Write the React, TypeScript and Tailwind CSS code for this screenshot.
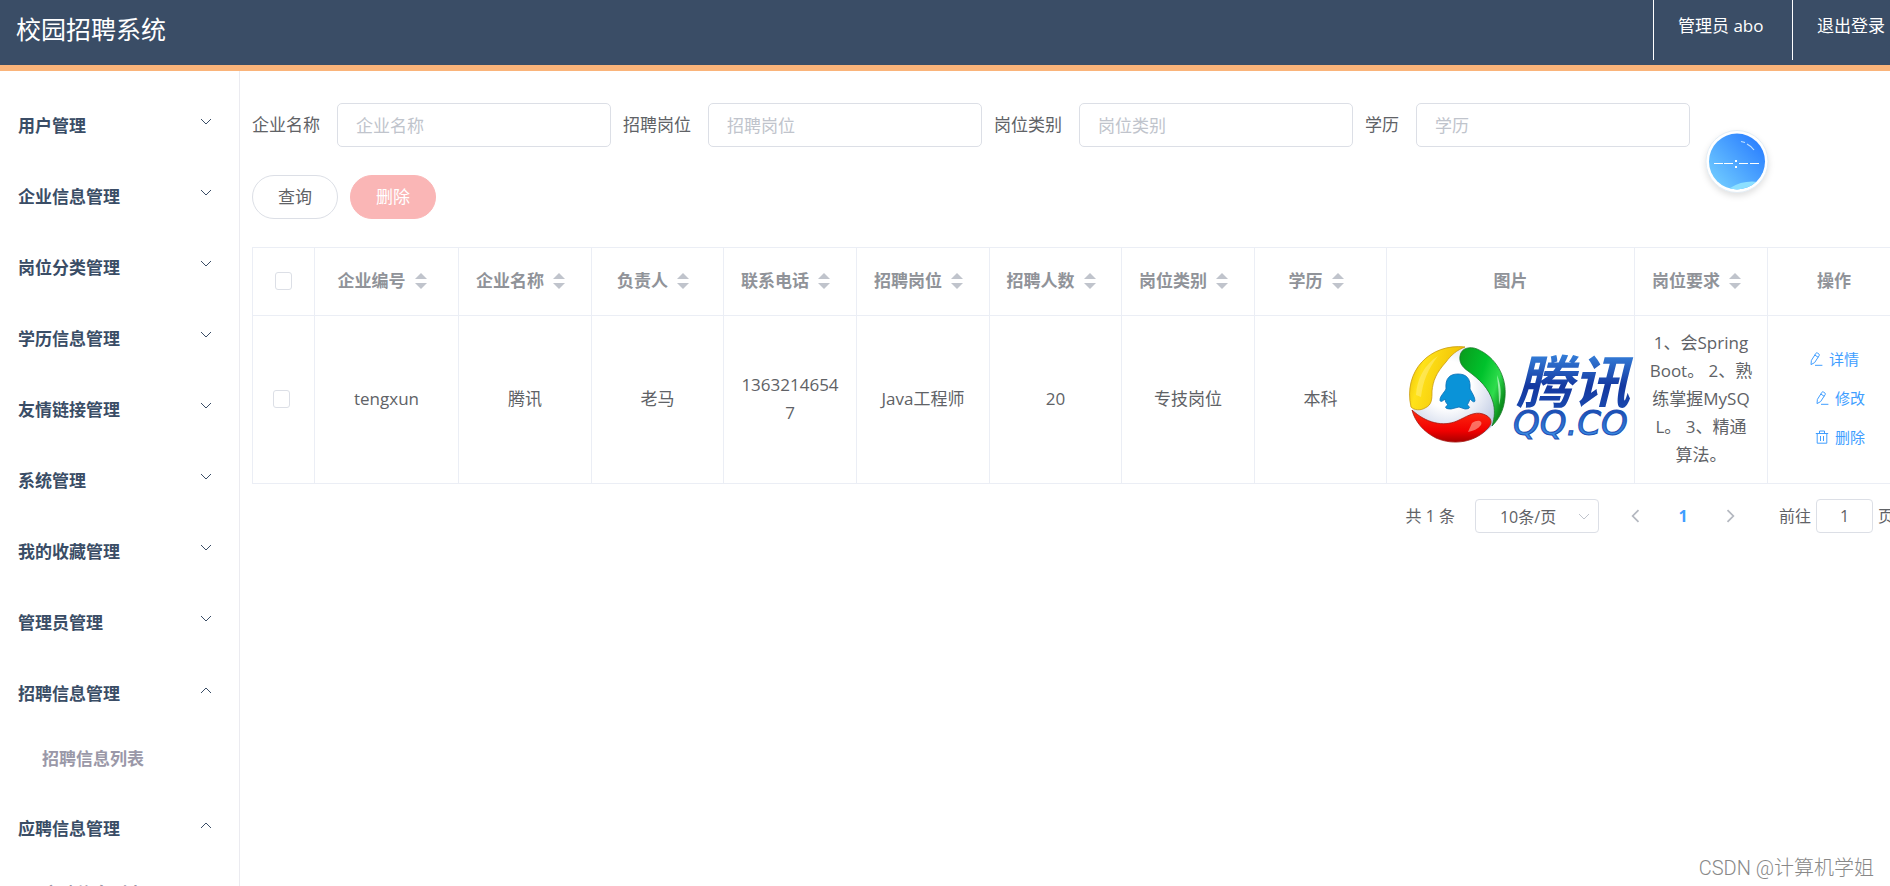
import { useState } from "react";

type MenuItem = {
    title: string;
    child?: string;
};

const menus: MenuItem[] = [
    { title: "用户管理" },
    { title: "企业信息管理" },
    { title: "岗位分类管理" },
    { title: "学历信息管理" },
    { title: "友情链接管理" },
    { title: "系统管理" },
    { title: "我的收藏管理" },
    { title: "管理员管理" },
    { title: "招聘信息管理", child: "招聘信息列表" },
    { title: "应聘信息管理", child: "应聘信息列表" },
];

const filters = [
    { id: "company", label: "企业名称" },
    { id: "job", label: "招聘岗位" },
    { id: "category", label: "岗位类别" },
    { id: "education", label: "学历" },
];

const columns = [
    { title: "企业编号", width: "w-[144px]", sortable: true },
    { title: "企业名称", width: "w-[133px]", sortable: true },
    { title: "负责人", width: "w-[132px]", sortable: true },
    { title: "联系电话", width: "w-[133px]", sortable: true },
    { title: "招聘岗位", width: "w-[133px]", sortable: true },
    { title: "招聘人数", width: "w-[132px]", sortable: true },
    { title: "岗位类别", width: "w-[133px]", sortable: true },
    { title: "学历", width: "w-[132px]", sortable: true },
    { title: "图片", width: "w-[248px]", sortable: false },
    { title: "岗位要求", width: "w-[133px]", sortable: true },
    { title: "操作", width: "w-[133px]", sortable: false },
];

const row = {
    cells: ["tengxun", "腾讯", "老马", "13632146547", "Java工程师", "20", "专技岗位", "本科"],
    requirement: "1、会SpringBoot。 2、熟练掌握MySQL。 3、精通算法。",
};

function Arrow({ className, d }: { className: string; d: string }) {
    return (
        <svg className={className} viewBox="0 0 12 12" fill="none" stroke="currentColor" aria-hidden="true">
            <path d={d} />
        </svg>
    );
}

function SortIcon() {
    return (
        <svg className="w-[30px] h-4 text-[#c0c4cc]" viewBox="0 0 30 16" fill="currentColor" aria-hidden="true">
            <path d="M15 0l6 6H9z" />
            <path d="M9 10h12l-6 6z" />
        </svg>
    );
}

function EditIcon() {
    return (
        <svg className="w-[14px] h-[14px]" viewBox="0 0 14 14" fill="none" stroke="currentColor" aria-hidden="true">
            <path d="M2.4 8.400L6.900 1.300Q7.500.5 8.400 1L10 2.100Q10.800 2.700 10.200 3.600L5.600 10.600L2 12.600zM5.800 3L9.200 5.300M6 13.300H13.400" />
        </svg>
    );
}

function DeleteIcon() {
    return (
        <svg className="w-[14px] h-[14px]" viewBox="0 0 14 14" fill="none" stroke="currentColor" aria-hidden="true">
            <path d="M.8 3.500h12.400M4.500 3.300V1h5v2.300M2.200 3.500v9.700h9.600V3.500M5.500 6v5M8.500 6v5" />
        </svg>
    );
}

function CompanyLogo() {
    return (
        <svg className="block w-[235px] h-[125px]" viewBox="0 0 235 125" role="img" aria-label="腾讯">
            <defs>
                <radialGradient id="ball" cx="0.4" cy="0.4" r="0.62">
                    <stop offset="0.4" stopColor="#ffffff" />
                    <stop offset="1" stopColor="#bcc8e2" />
                </radialGradient>
                <linearGradient id="yellow" x1="0" y1="0" x2="1" y2="0.3">
                    <stop offset="0" stopColor="#e6b800" />
                    <stop offset="0.3" stopColor="#ffe21a" />
                    <stop offset="1" stopColor="#efbd00" />
                </linearGradient>
                <linearGradient id="green" x1="0" y1="0" x2="1" y2="0.6">
                    <stop offset="0" stopColor="#0a9a1c" />
                    <stop offset="0.5" stopColor="#00c22c" />
                    <stop offset="0.8" stopColor="#2fdc4c" />
                    <stop offset="1" stopColor="#0b8f1d" />
                </linearGradient>
                <linearGradient id="red" x1="0" y1="0" x2="0" y2="1">
                    <stop offset="0" stopColor="#ff2a10" />
                    <stop offset="0.65" stopColor="#f00000" />
                    <stop offset="1" stopColor="#a80000" />
                </linearGradient>
                <linearGradient id="word" x1="0" y1="0" x2="0" y2="1">
                    <stop offset="0.15" stopColor="#3a8ae2" />
                    <stop offset="0.6" stopColor="#1438a0" />
                    <stop offset="1" stopColor="#1c50b4" />
                </linearGradient>
                <linearGradient id="site" x1="0" y1="0" x2="0" y2="1">
                    <stop offset="0.2" stopColor="#1c50b4" />
                    <stop offset="0.8" stopColor="#3a8ae2" />
                </linearGradient>
            </defs>
            <circle cx="58.500" cy="57" r="47" fill="url(#ball)" />
            <path d="M12 70C4 34 31 6 66 10C58 13 52 18 47 25C37 36 34 44 33 54C33 62 33 68 26 71C21 74 15 73 12 70z" fill="url(#yellow)" stroke="#c99a10" strokeWidth="0.800" />
            <path d="M61 19C62 11 71 9 78 12C97 20 108 40 106 60C105 73 100 82 93 89C96 80 96 72 94 65C90 51 80 42 69 34C63 30 60 25 61 19z" fill="url(#green)" stroke="#1b7a2a" strokeWidth="0.800" />
            <path d="M13 73C27 86 44 90 58 84C67 80 75 74 84 77C93 80 94 86 89 91C77 105 55 109 37 101C25 95 16 85 13 73z" fill="url(#red)" stroke="#a51810" strokeWidth="0.800" />
            <path d="M17 58C18 42 25 28 39 19C29 32 24 44 22 60z" fill="#fff3a0" opacity="0.400" />
            <path d="M98 38C102 48 103 58 100 68C100 56 99 48 98 38z" fill="#d0ffd8" opacity="0.700" />
            <path d="M73 86C79 82 84 84 82 88C79 92 74 94 69 95z" fill="#ffb0a0" opacity="0.600" />
            <path d="M47 52C46 41 51 37 59 37C67 37 72 41 71 52C73 56 76 60 76 64C75 66 73 64 71 62C70 65 69 67 68 68C72 70 71 72 66 72L60 70L52 72C46 72 45 70 49 68C47 66 46 64 46 62C43 65 41 65 41 63C41 59 45 56 47 52z" fill="#0a93d8" stroke="#0a6fb5" strokeWidth="0.800" />
            <text x="117" y="66" className="font-['Noto_Sans_CJK_SC',sans-serif] text-[57px] font-bold italic" fill="url(#word)">腾讯</text>
            <text x="114" y="98" className="font-['DejaVu_Sans',sans-serif] text-[34px] italic" fill="url(#site)" stroke="#1c50b4">QQ.CO</text>
        </svg>
    );
}

function ClockBall() {
    return (
        <svg className="absolute top-[126px] left-[1701px] w-[72px] h-[76px] drop-shadow-md" viewBox="0 0 72 76" role="img" aria-label="clock">
            <defs>
                <linearGradient id="sky" x1="0.1" y1="0.9" x2="0.85" y2="0.2">
                    <stop offset="0" stopColor="#70cbff" />
                    <stop offset="1" stopColor="#3085ff" />
                </linearGradient>
                <clipPath id="skyClip">
                    <circle cx="36" cy="35.500" r="28" />
                </clipPath>
            </defs>
            <circle cx="36" cy="35.500" r="31" fill="#fff" stroke="#e3edf5" />
            <circle cx="36" cy="35.500" r="28" fill="url(#sky)" />
            <g clipPath="url(#skyClip)">
                <path d="M29 62Q42 54 57 56L54 66H28z" fill="#8de0ff" />
            </g>
            <path d="M13 37.500h9M23 37.500h9M38 37.500h9M49 37.500h9" stroke="#fff" />
            <path d="M34 34h2v2h-2zM34 40h2v2h-2z" fill="#fff" />
            <path d="M40 15.500l4 1M46 18q4 2 7 6" stroke="#c4e2ff" strokeWidth="1.200" fill="none" />
        </svg>
    );
}

function Header() {
    return (
        <header className="flex items-start justify-between h-[71px] bg-[#3a4d66] border-b-[6px] border-[#fab47a] text-white">
            <h1 className="pl-4 text-[25px] leading-[58px]">校园招聘系统</h1>
            <nav className="flex">
                <a href="#admin" className="w-[139px] h-[60px] pl-6 border-l border-white leading-[52px]">管理员 abo</a>
                <a href="#logout" className="w-[120px] h-[60px] pl-6 border-l border-white leading-[52px]">退出登录</a>
            </nav>
        </header>
    );
}

function Sidebar() {
    return (
        <aside className="w-[240px] shrink-0 pt-5 border-r border-[#ebebf0] font-bold">
            {menus.map((m) => (
                <div key={m.title}>
                    <button type="button" aria-expanded={!!m.child} className="flex items-center justify-between w-full h-[71px] pl-[18px] pr-[27px] pb-px text-[#3a4d66]">
                        {m.title}
                        <Arrow className="w-3 h-3 mb-2" d={m.child ? "M1 9l5-5 5 5" : "M1 3l5 5 5-5"} />
                    </button>
                    {m.child && (
                        <a href="#list" className="flex items-center h-[60px] mb-1 pl-[42px] pb-0.5 text-[#9a98a8]">{m.child}</a>
                    )}
                </div>
            ))}
        </aside>
    );
}

function JobTable() {
    const [checked, setChecked] = useState(false);
    const box = "block appearance-none w-[17px] h-[18px] border border-[#dcdfe6] rounded-[3px] bg-white checked:bg-[#409eff]";

    return (
        <table className="w-full table-fixed border-collapse border border-[#ebeef5] text-center leading-7">
            <thead>
                <tr className="h-[68px] text-[#909399]">
                    <th className="w-[62px] border border-[#ebeef5] pl-[22px] pb-0.5">
                        <input type="checkbox" aria-label="全选" className={box} checked={checked} onChange={() => setChecked(!checked)} />
                    </th>
                    {columns.map((c) => (
                        <th key={c.title} className={`${c.width} border border-[#ebeef5] pb-0.5`}>
                            <div className="flex items-center justify-center">
                                {c.title}
                                {c.sortable && <SortIcon />}
                            </div>
                        </th>
                    ))}
                </tr>
            </thead>
            <tbody>
                <tr className="h-[168px]">
                    <td className="border border-[#ebeef5] pl-5 pb-0.5">
                        <input type="checkbox" aria-label="选择" className={box} checked={checked} onChange={() => setChecked(!checked)} />
                    </td>
                    {row.cells.map((text) => (
                        <td key={text} className="border border-[#ebeef5] px-3.5 pb-0.5 break-all">{text}</td>
                    ))}
                    <td className="border border-[#ebeef5] pl-3">
                        <CompanyLogo />
                    </td>
                    <td className="border border-[#ebeef5] px-3.5 pb-0.5 break-all">{row.requirement}</td>
                    <td className="border border-[#ebeef5] pb-1">
                        <div className="flex flex-col items-center gap-[11px] text-[15px] text-[#409eff]">
                            <button type="button" className="flex items-center gap-1.5"><EditIcon />详情</button>
                            <button type="button" className="flex items-center gap-1.5 ml-3"><EditIcon />修改</button>
                            <button type="button" className="flex items-center gap-1.5 ml-3"><DeleteIcon />删除</button>
                        </div>
                    </td>
                </tr>
            </tbody>
        </table>
    );
}

function Pagination() {
    return (
        <div className="flex items-center justify-end mt-[15px] pr-1.5 text-base leading-[34px]">
            <span className="mr-5">共 1 条</span>
            <div className="relative mr-3">
                <select aria-label="每页条数" className="block appearance-none w-[124px] h-[34px] pl-6 border border-[#dcdfe6] rounded bg-white">
                    <option>10条/页</option>
                </select>
                <Arrow className="absolute right-[9px] top-3 w-3 h-3 text-[#c0c4cc]" d="M1 3l5 5 5-5" />
            </div>
            <button type="button" aria-label="上一页" className="flex justify-center w-12 text-[#b4b8c0]">
                <Arrow className="w-[14px] h-[14px] stroke-[1.5]" d="M9 1L4 6l5 5" />
            </button>
            <button type="button" className="w-12 font-bold text-[#409eff]">1</button>
            <button type="button" aria-label="下一页" className="flex justify-center w-12 text-[#b4b8c0]">
                <Arrow className="w-[14px] h-[14px] stroke-[1.5]" d="M3 1l5 5-5 5" />
            </button>
            <label htmlFor="page" className="ml-6">前往</label>
            <input id="page" type="text" defaultValue="1" className="w-[57px] h-[34px] mx-[5px] border border-[#dcdfe6] rounded text-center" />
            <span>页</span>
        </div>
    );
}

function App() {
    return (
        <div className="relative h-screen overflow-hidden bg-white text-[17px] text-[#606266] font-['Open_Sans','Noto_Sans_CJK_SC',sans-serif]">
            <div className="min-w-[1912px]">
                <Header />
                <div className="flex items-stretch">
                    <Sidebar />
                    <main className="flex-1 min-w-0 px-3 pt-8">
                        <form className="flex gap-3" onSubmit={(e) => e.preventDefault()}>
                            {filters.map((f) => (
                                <div key={f.id} className="flex items-center gap-[17px]">
                                    <label htmlFor={f.id}>{f.label}</label>
                                    <input id={f.id} type="text" placeholder={f.label} className="w-[274px] h-11 px-[18px] border border-[#dcdfe6] rounded-[5px] placeholder:text-[#c0c4cc]" />
                                </div>
                            ))}
                        </form>
                        <div className="flex gap-3 my-7">
                            <button type="button" className="w-[86px] h-11 border border-[#dcdfe6] rounded-full">查询</button>
                            <button type="button" className="w-[86px] h-11 border border-[#fab6b6] rounded-full bg-[#fab6b6] text-white">删除</button>
                        </div>
                        <JobTable />
                        <Pagination />
                    </main>
                </div>
            </div>
            <ClockBall />
            <p className="absolute right-4 bottom-[3px] text-xl leading-[30px] font-light text-[#888] font-[Roboto,'Noto_Sans_CJK_SC',sans-serif]">CSDN @计算机学姐</p>
        </div>
    );
}

export default App;
